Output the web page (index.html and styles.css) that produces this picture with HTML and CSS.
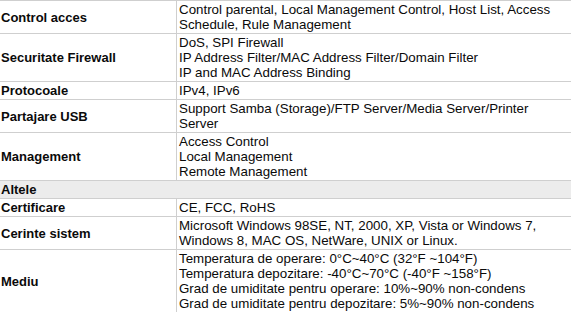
FILE: index.html
```html
<!DOCTYPE html>
<html lang="ro">
<head>
<meta charset="utf-8">
<title>Specificatii</title>
<link rel="stylesheet" href="styles.css">
</head>
<body>
<table class="spec">
  <tr>
    <td class="k">Control acces</td>
    <td class="v">Control parental, Local Management Control, Host List, Access Schedule, Rule Management</td>
  </tr>
  <tr>
    <td class="k">Securitate Firewall</td>
    <td class="v">DoS, SPI Firewall<br>IP Address Filter/MAC Address Filter/Domain Filter<br>IP and MAC Address Binding</td>
  </tr>
  <tr>
    <td class="k">Protocoale</td>
    <td class="v">IPv4, IPv6</td>
  </tr>
  <tr>
    <td class="k">Partajare USB</td>
    <td class="v">Support Samba (Storage)/FTP Server/Media Server/Printer Server</td>
  </tr>
  <tr>
    <td class="k">Management</td>
    <td class="v">Access Control<br>Local Management<br>Remote Management</td>
  </tr>
  <tr>
    <td class="section" colspan="2">Altele</td>
  </tr>
  <tr>
    <td class="k">Certificare</td>
    <td class="v">CE, FCC, RoHS</td>
  </tr>
  <tr>
    <td class="k">Cerinte sistem</td>
    <td class="v">Microsoft Windows 98SE, NT, 2000, XP, Vista or Windows 7, Windows 8, MAC OS, NetWare, UNIX or Linux.</td>
  </tr>
  <tr>
    <td class="k">Mediu</td>
    <td class="v">Temperatura de operare: 0°C~40°C (32°F ~104°F)<br>Temperatura depozitare: -40°C~70°C (-40°F ~158°F)<br>Grad de umiditate pentru operare: 10%~90% non-condens<br>Grad de umiditate pentru depozitare: 5%~90% non-condens</td>
  </tr>
</table>
</body>
</html>
```
FILE: styles.css
```css
html, body {
  margin: 0;
  padding: 0;
  background: #ffffff;
  overflow: hidden;
}

.spec {
  width: 571px;
  border-collapse: separate;
  border-spacing: 0;
  border-top: 1px solid #cfcfcf;
  font-family: "Liberation Sans", Arial, sans-serif;
  font-size: 13px;
  line-height: 15px;
  color: #0a0a0a;
  table-layout: fixed;
}

.spec td {
  border-bottom: 1px solid #cfcfcf;
  padding: 1px 2px;
}

.spec .k {
  width: 173px;
  padding: 1px 2px 1px 1px;
  border-right: 1px solid #cfcfcf;
  font-weight: bold;
  vertical-align: middle;
}

.spec .v {
  padding: 1px 12px 1px 2px;
  font-size: 13.33px;
  vertical-align: top;
}

.spec .section {
  padding: 1px 1px;
  background: #ececec;
  font-weight: bold;
}
```
